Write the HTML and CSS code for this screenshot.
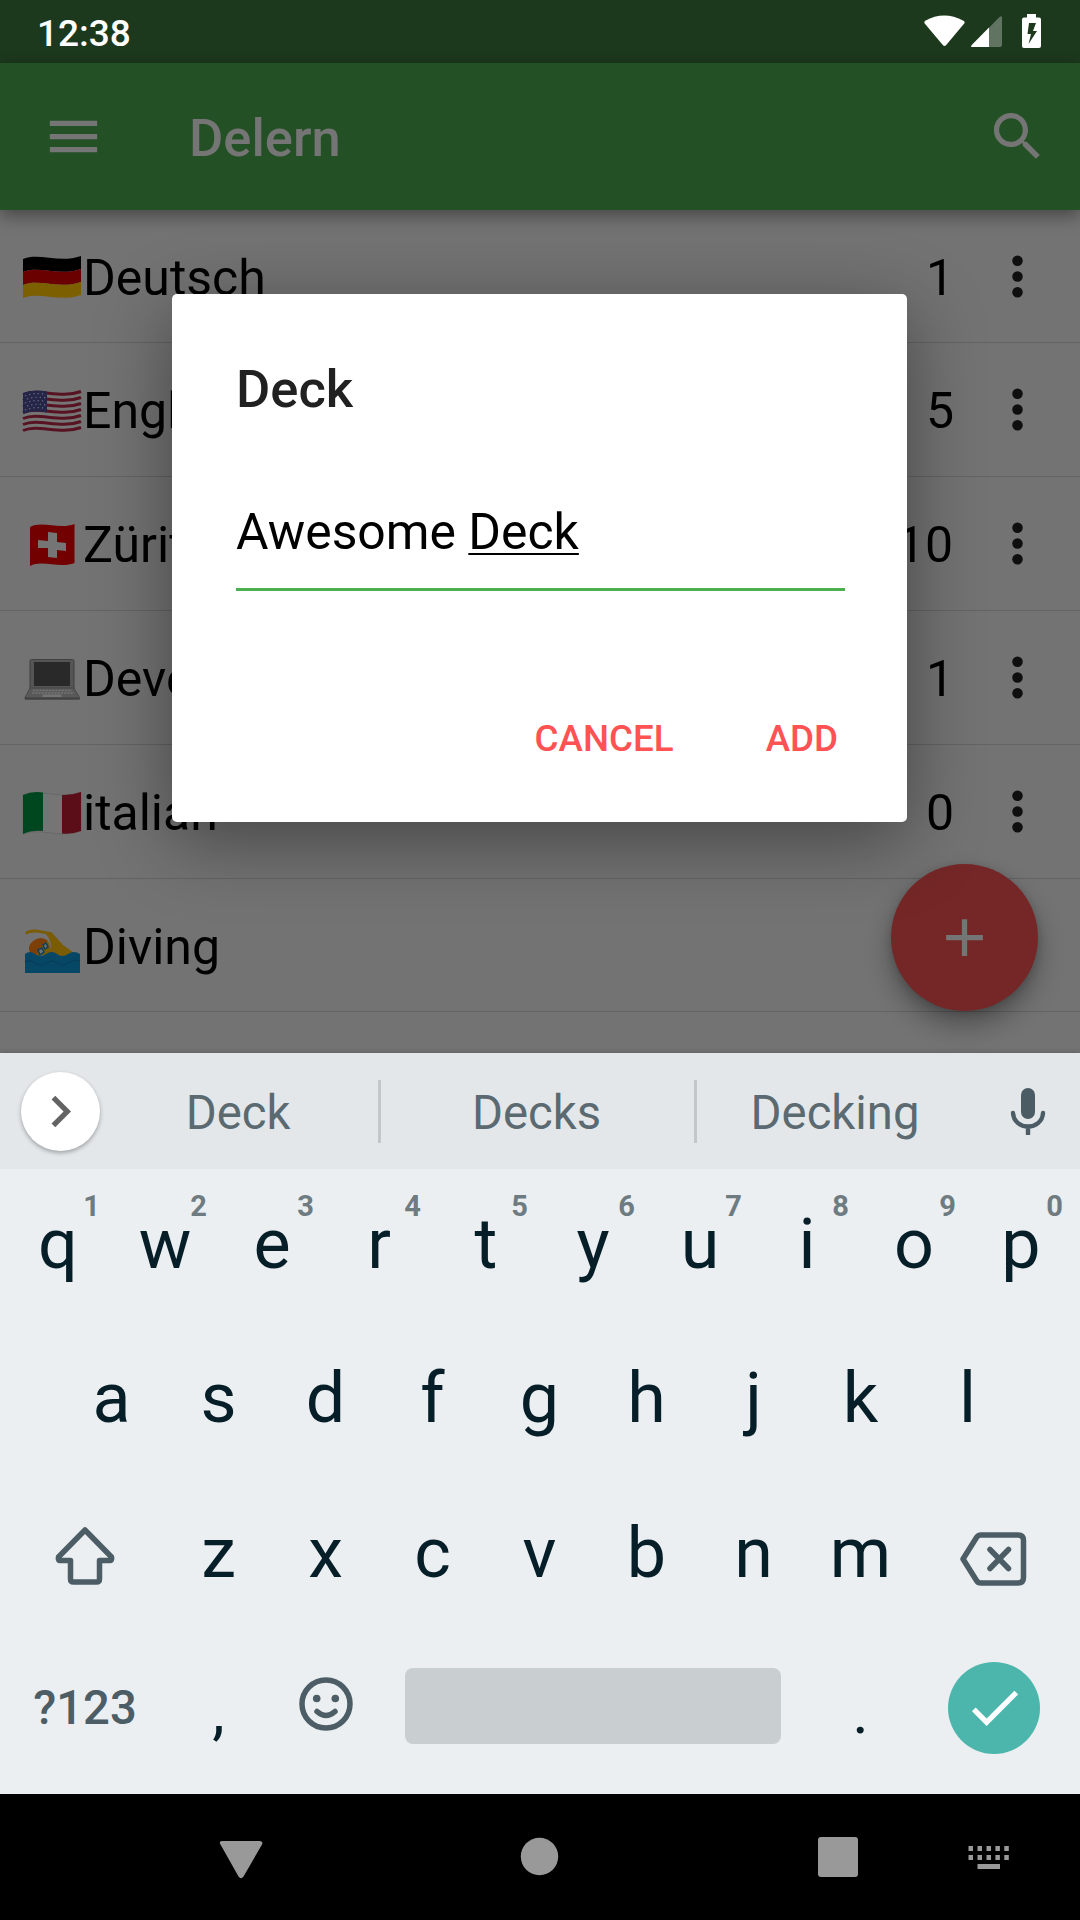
FILE: index.html
```html
<!DOCTYPE html>
<html lang="en">
<head>
<meta charset="utf-8">
<title>Delern</title>
<link rel="stylesheet" href="styles.css">
</head>
<body>
<div class="screen">
  <header class="status">
    <span class="clock">12:38</span>
    <svg class="status-icons" width="120" height="36" viewBox="0 0 120 36">
      <path fill="#fff" d="M4.700 9.600Q3.500 8 5.200 6.800Q24 -3.800 43.500 6.800Q45.500 8 44 9.800L26 31.200Q24.500 32.800 23 31.200Z"/>
      <path fill="#fff" fill-opacity=".3" d="M52 31L79 3.500Q82 1 82 4V31Q82 33 80 33H52.500Q50 33 52 31Z"/>
      <path fill="#fff" d="M69 13.500V33H52.500Q50 33 51.800 31Z"/>
      <path fill="#fff" fill-rule="evenodd" d="M107 0H116V3.500H119Q121 3.500 121 5.500V32Q121 34 119 34H104Q102 34 102 32V5.500Q102 3.500 104 3.500H107ZM109 9L107.500 20H111L108.500 30L117 17H113L116 9Z"/>
    </svg>
  </header>
  <header class="appbar">
    <svg class="icon" viewBox="0 0 24 24"><path d="M3 18h18v-2H3v2zm0-5h18v-2H3v2zm0-7v2h18V6H3z"/></svg>
    <h1 class="app-title">Delern</h1>
    <svg class="icon" viewBox="0 0 24 24"><path d="M15.500 14h-.79l-.28-.27C15.410 12.590 16 11.110 16 9.500 16 5.910 13.090 3 9.500 3S3 5.910 3 9.500 5.910 16 9.500 16c1.610 0 3.090-.59 4.230-1.570l.27.28v.79l5 4.990L20.490 19l-4.990-5zm-6 0C7.010 14 5 11.990 5 9.500S7.010 5 9.500 5 14 7.010 14 9.500 11.990 14 9.500 14z"/></svg>
  </header>

  <main class="stage">
    <ul class="decks">
      <li class="deck first">
        <svg class="emoji" viewBox="0 0 62 134">
          <path fill="#000" d="M2 50C18 43 38 55 60 47V60C38 68 18 56 2 63Z"/>
          <path fill="#6a0000" d="M2 63C18 56 38 68 60 60V73C38 81 18 69 2 76Z"/>
          <path fill="#7b5f00" d="M2 76C18 69 38 81 60 73V86C38 94 18 82 2 89Z"/>
        </svg>
        <span class="name">Deutsch</span><span class="count">1</span>
        <svg class="more" viewBox="0 0 24 24"><circle cx="12" cy="6" r="2"/><circle cx="12" cy="12" r="2"/><circle cx="12" cy="18" r="2"/></svg>
      </li>
      <li class="deck">
        <svg class="emoji" viewBox="0 0 62 134">
          <path fill="#757575" d="M2 50C18 43 38 55 60 47V86C38 94 18 82 2 89Z"/>
          <g fill="none" stroke="#571321" stroke-width="3">
            <path d="M2 51.500C18 44.500 38 56.500 60 48.500"/><path d="M2 57.500C18 50.500 38 62.500 60 54.500"/><path d="M2 63.500C18 56.500 38 68.500 60 60.500"/><path d="M2 69.500C18 62.500 38 74.500 60 66.500"/><path d="M2 75.500C18 68.500 38 80.500 60 72.500"/><path d="M2 81.500C18 74.500 38 86.500 60 78.500"/><path d="M2 87.500C18 80.500 38 92.500 60 84.500"/>
          </g>
          <path fill="#252548" d="M2 50Q13 46 26 48.500V69.500Q13 67 2 71Z"/>
          <g fill="none" stroke="#6b6b80" stroke-width="1.200" stroke-dasharray="1.300 3"><path d="M4 53Q14 49 25 51.500"/><path d="M6 56Q15 53 25 55"/><path d="M4 60Q14 56 25 58.500"/><path d="M6 63Q15 60 25 62"/><path d="M4 67Q14 63 25 65.500"/></g>
        </svg>
        <span class="name">English</span><span class="count">5</span>
        <svg class="more" viewBox="0 0 24 24"><circle cx="12" cy="6" r="2"/><circle cx="12" cy="12" r="2"/><circle cx="12" cy="18" r="2"/></svg>
      </li>
      <li class="deck">
        <svg class="emoji" viewBox="0 0 62 134">
          <path fill="#720000" d="M9 50C21 43 38 53 53.500 47V86C38 92 21 82 9 89Z"/>
          <path fill="#757575" d="M27 55L36 56V65L45 66V74L36 73V81L27 80V71L17 71V63L27 64Z"/>
        </svg>
        <span class="name">Züritüütsch</span><span class="count count-wide">10</span>
        <svg class="more" viewBox="0 0 24 24"><circle cx="12" cy="6" r="2"/><circle cx="12" cy="12" r="2"/><circle cx="12" cy="18" r="2"/></svg>
      </li>
      <li class="deck">
        <svg class="emoji" viewBox="0 0 62 134">
          <rect x="9" y="48.500" width="44" height="30" rx="1.500" fill="#555" stroke="#414141"/>
          <rect x="13" y="51" width="36" height="24" fill="#292929"/>
          <path fill="#595959" stroke="#414141" stroke-width=".8" d="M9 77H53L58.500 86.500V88H4V86.500Z"/>
          <path fill="none" stroke="#747474" stroke-width="1.500" stroke-dasharray="2.200 1" d="M12 79.500H51M11 82H53"/>
          <path fill="#747474" d="M22 83.500H40L41 86H21Z"/>
          <path fill="#414141" d="M4 86.500H58.500V88.500H4Z"/>
        </svg>
        <span class="name">Development</span><span class="count">1</span>
        <svg class="more" viewBox="0 0 24 24"><circle cx="12" cy="6" r="2"/><circle cx="12" cy="12" r="2"/><circle cx="12" cy="18" r="2"/></svg>
      </li>
      <li class="deck">
        <svg class="emoji" viewBox="0 0 62 134">
          <path fill="#757575" stroke="#666" stroke-width=".8" d="M2 50C18 43 38 55 60 47V86C38 94 18 82 2 89Z"/>
          <path fill="#00461f" d="M2 50Q11 46 22 47.500V86Q11 85 2 89Z"/>
          <path fill="#5b0e18" d="M41 50Q50 50.500 60 47V86Q51 89.500 41 88.500Z"/>
        </svg>
        <span class="name">italian</span><span class="count">0</span>
        <svg class="more" viewBox="0 0 24 24"><circle cx="12" cy="6" r="2"/><circle cx="12" cy="12" r="2"/><circle cx="12" cy="18" r="2"/></svg>
      </li>
      <li class="deck last">
        <svg class="emoji" viewBox="0 0 62 134">
          <path fill="#7a5c05" d="M4 55Q6 51 15 51.500L29 54Q31 54 33 57L42 67L56 77V82H22L28 74Q33 66 25 56L16 54.500Q9 54 5 56.500Z"/>
          <path fill="#7c3f08" d="M9 75Q6 68 12 63Q20 57 27 63L18 74V80Z"/>
          <path fill="#7a5c05" d="M27 63Q31 69 28 77H16L18 71Z"/>
          <path fill="#6d7075" stroke="#0a3e5c" stroke-width="1.500" d="M17 72l4-2 2 4-4 3zM22 67l3-2 2 4-3 2z"/>
          <path fill="#074766" d="M4 76Q9 72 14 76T25 76T36 76T47 76T59 76V95H4Z"/>
          <path fill="none" stroke="#073f5b" stroke-width="1.500" d="M4 84Q9 81 14 85T25 85T36 85T47 85T59 83"/>
        </svg>
        <span class="name">Diving</span>
      </li>
    </ul>
    <div class="fab"><svg viewBox="0 0 24 24"><path d="M19 13h-6v6h-2v-6H5v-2h6V5h2v6h6v2z"/></svg></div>
    <section class="dialog">
      <h2 class="dialog-title">Deck</h2>
      <div class="field">Awesome <span class="composing">Deck</span></div>
      <div class="actions"><span>CANCEL</span><span>ADD</span></div>
    </section>
  </main>

  <section class="keyboard">
    <div class="suggestions">
      <div class="expand"><svg viewBox="0 0 24 24"><path d="M10 6L8.590 7.410 13.170 12l-4.580 4.590L10 18l6-6z"/></svg></div>
      <span class="word">Deck</span>
      <i class="sep"></i>
      <span class="word wide">Decks</span>
      <i class="sep"></i>
      <span class="word">Decking</span>
      <svg class="mic" width="36" height="48" viewBox="0 0 36 48"><rect x="11" y="1" width="14" height="31" rx="7" fill="#4b5c64"/><path d="M3 26C4 44 32 44 33 26M18 41V47" fill="none" stroke="#4b5c64" stroke-width="4.400" stroke-linecap="round"/></svg>
    </div>
    <div class="keys">
      <div class="row">
        <span class="key">q<sup>1</sup></span><span class="key">w<sup>2</sup></span><span class="key">e<sup>3</sup></span><span class="key">r<sup>4</sup></span><span class="key">t<sup>5</sup></span><span class="key">y<sup>6</sup></span><span class="key">u<sup>7</sup></span><span class="key">i<sup>8</sup></span><span class="key">o<sup>9</sup></span><span class="key">p<sup>0</sup></span>
      </div>
      <div class="row">
        <span class="key">a</span><span class="key">s</span><span class="key">d</span><span class="key">f</span><span class="key">g</span><span class="key">h</span><span class="key">j</span><span class="key">k</span><span class="key">l</span>
      </div>
      <div class="row">
        <span class="key edge"><svg width="60" height="60" viewBox="0 0 60 60"><path d="M30 4L56.500 31Q57.500 35 54 34.500H44.500V53Q44.500 56 41.500 56H18.500Q15.500 56 15.500 53V34.500H6Q2.500 35 3.500 31Z"/></svg></span>
        <span class="key">z</span><span class="key">x</span><span class="key">c</span><span class="key">v</span><span class="key">b</span><span class="key">n</span><span class="key">m</span>
        <span class="key edge backspace"><svg width="68" height="56" viewBox="0 0 68 56"><path d="M4 28L17.500 6.500Q19 4 22 4H59Q64.500 4 64.500 9.500V46.500Q64.500 52 59 52H22Q19 52 17.500 49.500ZM31 18.500L49.500 37.500M49.500 18.500L31 37.500"/></svg></span>
      </div>
      <div class="row bottom">
        <span class="key edge symbols">?123</span>
        <span class="key punct">,</span>
        <span class="key"><svg width="56" height="56" viewBox="0 0 56 56"><circle cx="28" cy="28" r="24"/><circle class="solid" cx="18.700" cy="22.500" r="3.800"/><circle class="solid" cx="37.300" cy="22.500" r="3.800"/><path class="smile" d="M19 35.500Q28 43.500 37 35.500"/></svg></span>
        <span class="space"></span>
        <span class="key punct dot">.</span>
        <span class="key edge"><span class="done"><svg viewBox="0 0 24 24"><path d="M9 16.170L4.830 12l-1.420 1.410L9 19 21 7l-1.410-1.410z"/></svg></span></span>
      </div>
    </div>
  </section>

  <footer class="nav">
    <svg width="1080" height="126" viewBox="0 0 1080 126" fill="#999">
      <path d="M222 47H260Q263.500 47.500 262 50.500L243.500 82.500Q241 86 238.500 82.500L220.500 50.500Q218.500 47.500 222 47Z"/>
      <circle cx="539.500" cy="62.500" r="18.700"/>
      <rect x="818" y="43" width="40" height="40" rx="3"/>
      <path d="M968.500 52h4.500v5h-4.500zM977.500 52h4.500v5h-4.500zM986.500 52h4.500v5h-4.500zM995.400 52h4.500v5h-4.500zM1004.300 52h4.500v5h-4.500zM968.500 61h4.500v5h-4.500zM977.500 61h4.500v5h-4.500zM986.500 61h4.500v5h-4.500zM995.400 61h4.500v5h-4.500zM1004.300 61h4.500v5h-4.500zM977.500 70h22.500v5h-22.500z"/>
    </svg>
  </footer>
</div>
</body>
</html>
```
FILE: styles.css
```css
* { box-sizing: border-box; }
body { margin: 0; background: #000; font-family: Roboto, "Noto Sans", sans-serif; }
h1, h2, ul { margin: 0; padding: 0; }
h1, h2 { font-weight: 500; }
ul { list-style: none; }

.screen { width: 1080px; height: 1920px; display: flex; flex-direction: column; overflow: hidden; }

.status { height: 63px; background: #1c381d; display: flex; justify-content: space-between; padding: 14px 40px 0 37px; }
.clock { color: #fff; font-size: 37px; font-weight: 500; line-height: 39px; }
.status-icons { overflow: visible; }

.appbar { height: 147px; background: #245026; display: flex; align-items: center; padding: 0 31px 0 42px; position: relative; z-index: 2; box-shadow: 0 6px 16px rgba(0, 0, 0, .38); }
.icon { width: 63px; height: 63px; fill: #757575; }
.app-title { flex: 1; margin-left: 84px; padding-top: 3px; font-size: 52.5px; color: #757575; line-height: 62px; }

.stage { height: 843px; background: #737373; position: relative; overflow: hidden; }
.deck { height: 134px; border-bottom: 1px solid #636363; display: flex; align-items: center; padding: 0 31px 0 21px; font-size: 50px; color: #000; }
.deck.first, .deck.last { height: 133px; }
.emoji { width: 62px; height: 134px; flex: none; }
.name { flex: 1; padding-top: 3px; }
.count { padding-top: 3px; margin-right: 32px; }
.count-wide { margin-right: 33px; }
.more { width: 63px; height: 63px; fill: #0f0f0f; }

.fab { position: absolute; left: 891px; top: 653.500px; width: 147px; height: 147px; border-radius: 50%; background: #752727; display: flex; align-items: center; justify-content: center; box-shadow: 0 14px 26px rgba(0, 0, 0, .32), 0 2px 8px rgba(0, 0, 0, .15); }
.fab svg { width: 63px; height: 63px; fill: #757575; }

.dialog { position: absolute; left: 172px; top: 84px; width: 735px; height: 528px; border-radius: 5px; background: #fff; padding: 63px 62px 0 64px; box-shadow: 0 18px 76px rgba(0, 0, 0, .4); }
.dialog-title { font-size: 52.500px; line-height: 64px; color: #212121; }
.field { margin-top: 74px; height: 96px; border-bottom: 3px solid #4caf50; font-size: 49.875px; line-height: 74px; color: #000; }
.composing { text-decoration: underline; text-decoration-thickness: 2px; text-underline-offset: 4px; text-decoration-skip-ink: none; }
.actions { display: flex; justify-content: flex-end; gap: 92px; margin-top: 124px; padding-right: 7px; font-size: 36.750px; font-weight: 500; line-height: 48px; color: #ff5252; }

.keyboard { height: 741px; background: #ebeff2; color: #061e28; display: flex; flex-direction: column; position: relative; z-index: 3; box-shadow: 0 -1px 5px rgba(0, 0, 0, .15); }
.suggestions { flex: none; height: 116px; background: #e3e7ea; display: flex; align-items: center; padding: 0 34px 0 21px; }
.expand { width: 79px; height: 79px; border-radius: 50%; background: #fff; display: flex; align-items: center; justify-content: center; box-shadow: 0 2px 4px rgba(0, 0, 0, .3); }
.expand svg { width: 63px; height: 63px; fill: #636363; }
.word { width: 278px; text-align: center; font-size: 47.250px; color: #5b6a71; padding: 4px 2px 0 0; }
.word.wide { width: 313px; }
.sep { width: 3px; height: 63px; background: #c2c7ca; }
.mic { margin-left: auto; }

.keys { flex: none; height: 625px; padding: 13px 1px 0 0; overflow: hidden; }
.row { height: 154.300px; display: flex; justify-content: center; }
.key { width: 107px; position: relative; text-align: center; font-size: 70px; line-height: 124px; }
.key sup { position: absolute; top: 1px; left: 78px; width: 18px; font-size: 29px; line-height: 47px; font-weight: 700; color: #6e7b81; }
.edge { width: 160px; }
.key svg { fill: none; stroke: #4c5d65; stroke-width: 5.500; stroke-linejoin: round; stroke-linecap: round; display: block; margin: 35px auto 0; }
.key .solid { fill: #4c5d65; stroke: none; }
.key.backspace { padding-right: 3px; }
.backspace svg { margin-top: 40px; }
.symbols { font-size: 47.250px; font-weight: 500; color: #4c5d65; line-height: 126px; }
.bottom .key svg { margin-top: 31px; }
.punct { font-size: 63px; line-height: 133px; }
.space { width: 376px; height: 76px; border-radius: 8px; background: #c9ced1; margin: 23px 26px 0 26px; }
.done { display: flex; width: 92px; height: 92px; margin: 17px auto 0; border-radius: 50%; background: #4db6ac; align-items: center; justify-content: center; }
.bottom .key .done svg { width: 63px; height: 63px; margin: 0; fill: #fff; stroke: none; }

.nav { height: 126px; background: #000; }
.nav svg { display: block; }
```
